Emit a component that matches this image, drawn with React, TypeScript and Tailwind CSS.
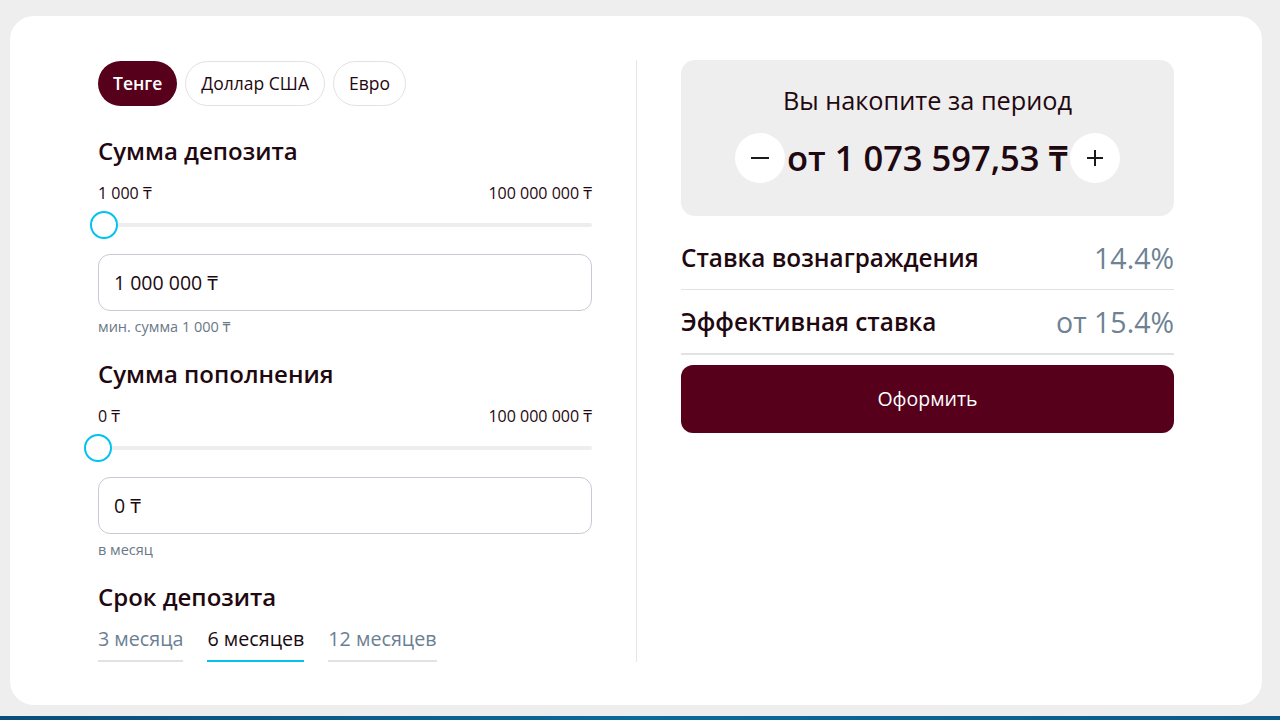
import React from "react";

const font = { fontFamily: '"Open Sans", "Noto Sans", sans-serif' };

function Slider({ thumbX }: { thumbX: number }) {
  return (
    <div className="relative h-[28px] flex items-center">
      <div className="h-[4px] w-full bg-[#eeeeee] rounded" />
      <div
        className="absolute top-0 w-[28px] h-[28px] rounded-full border-2 border-[#00c3f0] bg-white"
        style={{ left: thumbX }}
      />
    </div>
  );
}

function AmountBlock({
  title,
  min,
  max,
  value,
  hint,
  thumbX,
}: {
  title: string;
  min: string;
  max: string;
  value: string;
  hint: string;
  thumbX: number;
}) {
  return (
    <div className="flex flex-col">
      <h2 className="text-[24px] leading-[32px] font-semibold text-[#1f0810]">{title}</h2>
      <div className="flex justify-between mt-[16px] text-[16px] leading-[20px] text-[#1f0810]">
        <span>{min}</span>
        <span>{max}</span>
      </div>
      <div className="mt-[8px] -ml-[8px]">
        <Slider thumbX={thumbX} />
      </div>
      <div className="mt-[15px] h-[57px] border border-[#c9c9d3] rounded-[12px] flex items-center px-[15px] text-[19.5px] text-[#1a0a10]">
        {value}
      </div>
      <div className="mt-[6px] text-[14.5px] leading-[20px] text-[#6b7887]">{hint}</div>
    </div>
  );
}

export default function App() {
  return (
    <div className="w-[1280px] h-[720px] bg-[#eeeeee] flex flex-col overflow-hidden" style={font}>
      <div className="mx-[10px] mt-[16px] mr-[18px] h-[689px] bg-white rounded-[24px] flex px-[88px] pt-[44px]">
        <div className="w-[494px] flex flex-col">
          <div className="flex gap-[8px] mt-[1px]">
            <button className="h-[45px] px-[15px] rounded-full bg-[#56001b] text-white text-[17.5px] font-semibold">Тенге</button>
            <button className="h-[45px] px-[15px] rounded-full border border-[#e2e2e2] text-[#1f0810] text-[17.5px]">Доллар США</button>
            <button className="h-[45px] px-[15px] rounded-full border border-[#e2e2e2] text-[#1f0810] text-[17.5px]">Евро</button>
          </div>
          <div className="mt-[29px]">
            <AmountBlock
              title="Сумма депозита"
              min="1 000 ₸"
              max="100 000 000 ₸"
              value="1 000 000 ₸"
              hint="мин. сумма 1 000 ₸"
              thumbX={0}
            />
          </div>
          <div className="mt-[21px]">
            <AmountBlock
              title="Сумма пополнения"
              min="0 ₸"
              max="100 000 000 ₸"
              value="0 ₸"
              hint="в месяц"
              thumbX={-6}
            />
          </div>
          <div className="mt-[21px]">
            <h2 className="text-[24px] leading-[32px] font-semibold text-[#1f0810]">Срок депозита</h2>
            <div className="flex gap-[24px] mt-[12px] text-[19.7px] leading-[27px]">
              <div className="pb-[8px] border-b-2 border-[#e2e2e2] text-[#6b7f93]">3 месяца</div>
              <div className="pb-[8px] border-b-2 border-[#00c3f0] text-[#1a0a10]">6 месяцев</div>
              <div className="pb-[8px] border-b-2 border-[#e2e2e2] text-[#6b7f93]">12 месяцев</div>
            </div>
          </div>
        </div>
        <div className="w-px bg-[#e6e6e6] ml-[44px] mr-[44px] h-[602px]" />
        <div className="w-[493px] flex flex-col">
          <div className="h-[156px] bg-[#eeeeee] rounded-[14px] flex flex-col items-center pt-[24px]">
            <div className="text-[25.3px] leading-[32px] font-medium text-[#1f0810]">Вы накопите за период</div>
            <div className="flex items-center mt-[17px]">
              <div className="w-[50px] h-[50px] rounded-full bg-white flex items-center justify-center text-[#1a1a1a]">
                <svg width="20" height="20" viewBox="0 0 20 20"><path d="M1 10h18" stroke="#1a1a1a" strokeWidth="2" /></svg>
              </div>
              <div className="text-[34.5px] leading-[48px] font-semibold text-[#1f0810] mx-[2px]">от 1 073 597,53 ₸</div>
              <div className="w-[50px] h-[50px] rounded-full bg-white flex items-center justify-center">
                <svg width="20" height="20" viewBox="0 0 20 20"><path d="M2 10h16M10 2v16" stroke="#1a1a1a" strokeWidth="2" /></svg>
              </div>
            </div>
          </div>
          <div className="flex justify-between items-center h-[74px] pt-[12px] border-b border-[#e2e2e2]">
            <span className="text-[24.3px] font-semibold text-[#1f0810]">Ставка вознаграждения</span>
            <span className="text-[28.5px] text-[#6e8293]">14.4%</span>
          </div>
          <div className="flex justify-between items-center h-[65px] pt-[2px] border-b-2 border-[#e2e2e2]">
            <span className="text-[24.3px] font-semibold text-[#1f0810]">Эффективная ставка</span>
            <span className="text-[28.5px] text-[#6e8293]">от 15.4%</span>
          </div>
          <button className="mt-[10px] h-[68px] rounded-[12px] bg-[#56001b] text-white text-[19.5px]">Оформить</button>
        </div>
      </div>
      <div className="mt-[11px] h-[4px] bg-gradient-to-r from-[#0b4d78] via-[#0a6a99] to-[#0b5a88]" />
    </div>
  );
}
